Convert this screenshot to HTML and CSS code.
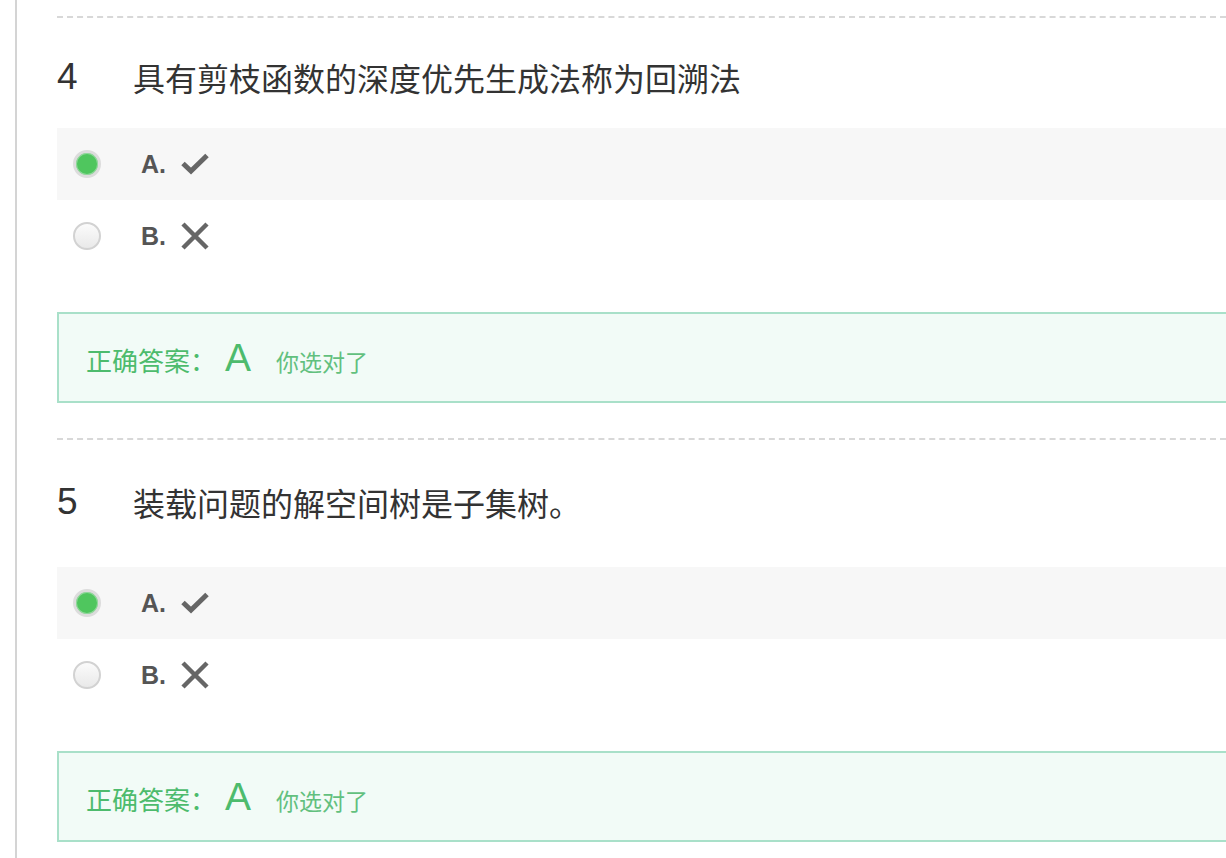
FILE: index.html
```html
<!DOCTYPE html>
<html lang="zh-CN">
<head>
  <meta charset="UTF-8">
  <meta name="viewport" content="width=device-width, initial-scale=1.0">
  <title>作业详情</title>
  <link rel="stylesheet" href="styles.css">
</head>
<body>
  <div class="page">
    <div class="content">

      <!-- 第4题 -->
      <div class="question">
        <div class="q-title">
          <span class="q-num">4</span>
          <span class="q-text">具有剪枝函数的深度优先生成法称为回溯法</span>
        </div>
        <ul class="options">
          <li class="option selected">
            <span class="radio checked"></span>
            <span class="opt-label">A.</span>
            <svg class="mark" width="30" height="24" viewBox="0 0 30 24"><path d="M3 11.5 L11 19 L27 3.5" fill="none" stroke="#666" stroke-width="5"/></svg>
          </li>
          <li class="option">
            <span class="radio"></span>
            <span class="opt-label">B.</span>
            <svg class="mark" width="30" height="30" viewBox="0 0 30 30"><path d="M3 3 L27 27 M27 3 L3 27" fill="none" stroke="#666" stroke-width="4.5"/></svg>
          </li>
        </ul>
        <div class="answer">
          <span class="answer-label">正确答案：</span>
          <span class="answer-key">A</span>
          <span class="answer-note">你选对了</span>
        </div>
      </div>

      <!-- 第5题 -->
      <div class="question">
        <div class="q-title q-title--spaced">
          <span class="q-num">5</span>
          <span class="q-text">装载问题的解空间树是子集树。</span>
        </div>
        <ul class="options">
          <li class="option selected">
            <span class="radio checked"></span>
            <span class="opt-label">A.</span>
            <svg class="mark" width="30" height="24" viewBox="0 0 30 24"><path d="M3 11.5 L11 19 L27 3.5" fill="none" stroke="#666" stroke-width="5"/></svg>
          </li>
          <li class="option">
            <span class="radio"></span>
            <span class="opt-label">B.</span>
            <svg class="mark" width="30" height="30" viewBox="0 0 30 30"><path d="M3 3 L27 27 M27 3 L3 27" fill="none" stroke="#666" stroke-width="4.5"/></svg>
          </li>
        </ul>
        <div class="answer">
          <span class="answer-label">正确答案：</span>
          <span class="answer-key">A</span>
          <span class="answer-note">你选对了</span>
        </div>
      </div>

    </div>
  </div>
</body>
</html>
```

FILE: styles.css
```css
/* 基础 */
* { box-sizing: border-box; }
html, body {
  margin: 0;
  padding: 0;
  background: #fff;
  overflow: hidden;
}
body {
  font-family: "Liberation Sans", "Noto Sans CJK SC", sans-serif;
  color: #333;
}
.page {
  margin-left: 15px;
  border-left: 2px solid #d4d4d4;
  min-height: 858px;
  padding-top: 16px;
}
.content {
  margin-left: 40px;
}

/* 题目 */
.question {
  border-top: 2px dashed #d8d8d8;
  padding-bottom: 35px;
}
.q-title {
  display: flex;
  align-items: center;
  margin-top: 39px;
  margin-bottom: 31px;
  line-height: 40px;
}
.q-title--spaced {
  margin-top: 42px;
  margin-bottom: 45px;
}
.q-num {
  width: 76px;
  font-size: 37px;
  color: #333;
}
.q-text {
  font-family: "Noto Sans CJK SC", sans-serif;
  font-size: 32px;
  color: #333;
}

/* 选项 */
.options {
  list-style: none;
  margin: 0;
  padding: 0;
}
.option {
  display: flex;
  align-items: center;
  height: 72px;
  padding-left: 16px;
}
.option.selected {
  background: #f7f7f7;
}
.radio {
  width: 28px;
  height: 28px;
  border-radius: 50%;
  border: 2px solid #d2d2d2;
  background: linear-gradient(#fbfbfb, #e9e9e9);
  margin-right: 40px;
  flex: none;
}
.radio.checked {
  border: 3px solid #dcdcdc;
  background: #4fc65e;
  box-shadow: inset 0 0 0 1px #8fd89a;
}
.opt-label {
  font-size: 25px;
  font-weight: bold;
  color: #555;
  width: 39px;
}
.mark {
  display: block;
}

/* 答案 */
.answer {
  display: flex;
  align-items: baseline;
  margin-top: 40px;
  height: 91px;
  padding: 22px 0 0 27px;
  border: 2px solid #a9e0c9;
  border-right: none;
  background: #f2fbf7;
  font-family: "Noto Sans CJK SC", sans-serif;
  color: #4dbb6d;
}
.answer-label {
  font-size: 26px;
}
.answer-key {
  font-family: "Liberation Sans", sans-serif;
  font-size: 39px;
  margin: 0 25px 0 9px;
}
.answer-note {
  font-size: 23px;
  color: #62c07e;
}
```
